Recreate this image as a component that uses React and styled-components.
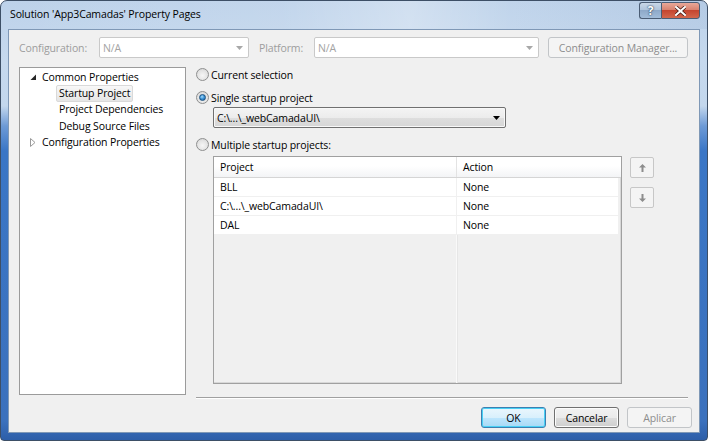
import React from 'react';
import styled, { createGlobalStyle, css } from 'styled-components';

const Global = createGlobalStyle`
  html, body { margin: 0; padding: 0; background: #fff; }
  * { box-sizing: border-box; }
  body {
    font-family: "Open Sans", "Noto Sans", sans-serif;
    font-size: 10.5px;
    letter-spacing: -0.12px;
    color: #000;
  }
`;

const treeItems = [
  { label: 'Common Properties', level: 0, arrow: 'open' },
  { label: 'Startup Project', level: 1, selected: true },
  { label: 'Project Dependencies', level: 1 },
  { label: 'Debug Source Files', level: 1 },
  { label: 'Configuration Properties', level: 0, arrow: 'closed' },
];

const projects = [
  { name: 'BLL', action: 'None' },
  { name: 'C:\\...\\_webCamadaUI\\', action: 'None' },
  { name: 'DAL', action: 'None' },
];

function Radio({ checked }) {
  return <RadioCircle>{checked && <RadioDot />}</RadioCircle>;
}

function DropArrow({ disabled }) {
  return (
    <svg width="7" height="4" viewBox="0 0 7 4">
      <path d="M0 0h7L3.5 4z" fill={disabled ? '#a8a8a8' : '#000'} />
    </svg>
  );
}

function MoveArrow({ down }) {
  return (
    <svg width="7" height="8" viewBox="0 0 7 8" style={down ? { transform: 'rotate(180deg)' } : undefined}>
      <path d="M3.5 0L7 3.5H4.5V8h-2V3.5H0z" fill="#8d8d8d" />
    </svg>
  );
}

function TreeArrow({ kind }) {
  if (kind === 'open') {
    return (
      <svg width="7" height="7" viewBox="0 0 7 7">
        <path d="M6 0.5V6H0.5z" fill="#262626" />
      </svg>
    );
  }
  return (
    <svg width="6" height="9" viewBox="0 0 6 9">
      <path d="M0.5 0.5L5 4.5L0.5 8.5z" fill="#fff" stroke="#9a9a9a" strokeWidth="1" />
    </svg>
  );
}

export default function App() {
  return (
    <>
      <Global />
      <Window>
        <TitleBar>
          <Title>Solution 'App3Camadas' Property Pages</Title>
          <CaptionButtons>
            <HelpButton>?</HelpButton>
            <CloseButton>
              <svg width="11" height="10" viewBox="0 0 11 10">
                <path d="M1 1L10 9M10 1L1 9" stroke="#4a1e18" strokeWidth="3.6" strokeLinecap="square" />
                <path d="M1 1L10 9M10 1L1 9" stroke="#fff" strokeWidth="2" strokeLinecap="square" />
              </svg>
            </CloseButton>
          </CaptionButtons>
        </TitleBar>
        <Client>
          <TopRow>
            <FieldLabel $w={80}>Configuration:</FieldLabel>
            <Combo $w={150} $disabled>
              <span>N/A</span>
              <DropArrow disabled />
            </Combo>
            <FieldLabel $w={55} $ml={10}>Platform:</FieldLabel>
            <Combo $w={225} $disabled>
              <span>N/A</span>
              <DropArrow disabled />
            </Combo>
            <PushButton $w={140} $ml={9} $variant="disabled">Configuration Manager...</PushButton>
          </TopRow>

          <Main>
            <Tree>
              {treeItems.map((it) => (
                <TreeRow key={it.label} $level={it.level}>
                  {it.level === 0 && (
                    <ArrowSlot>
                      <TreeArrow kind={it.arrow} />
                    </ArrowSlot>
                  )}
                  <TreeLabel $selected={it.selected}>{it.label}</TreeLabel>
                </TreeRow>
              ))}
            </Tree>

            <RightPane>
              <RadioRow>
                <Radio />
                <span>Current selection</span>
              </RadioRow>
              <RadioRow $mt={8}>
                <Radio checked />
                <span>Single startup project</span>
              </RadioRow>
              <Combo $w={293} $ml={17} $mt={2}>
                <span>C:\...\_webCamadaUI\</span>
                <DropArrow />
              </Combo>
              <RadioRow $mt={9}>
                <Radio />
                <span>Multiple startup projects:</span>
              </RadioRow>

              <GridArea>
                <Table>
                  <HeaderRow>
                    <HeadCell>Project</HeadCell>
                    <HeadCell>Action</HeadCell>
                  </HeaderRow>
                  {projects.map((p) => (
                    <Row key={p.name}>
                      <Cell>{p.name}</Cell>
                      <Cell>{p.action}</Cell>
                    </Row>
                  ))}
                  <EmptyRest>
                    <EmptyCol />
                    <span />
                  </EmptyRest>
                </Table>
                <MoveButtons>
                  <MoveButton>
                    <MoveArrow />
                  </MoveButton>
                  <MoveButton>
                    <MoveArrow down />
                  </MoveButton>
                </MoveButtons>
              </GridArea>

              <Separator />
            </RightPane>
          </Main>

          <ButtonRow>
            <PushButton $w={65} $variant="default">OK</PushButton>
            <PushButton $w={65}>Cancelar</PushButton>
            <PushButton $w={65} $variant="disabled">Aplicar</PushButton>
          </ButtonRow>
        </Client>
      </Window>
    </>
  );
}

const Window = styled.div`
  width: 708px;
  height: 441px;
  display: flex;
  flex-direction: column;
  padding: 0 7px 7px 7px;
  border: 1px solid #3d4f66;
  border-radius: 7px 7px 4px 4px;
  background:
    linear-gradient(to bottom, #bdd2ea 0px, #c6d9ee 60px, #c3d7ed 105px, #6d9ad6 125px, #3a76c6 150px, #3b71bd 420px, #2d5ea8 100%);
  overflow: hidden;
`;

const TitleBar = styled.div`
  height: 28px;
  display: flex;
  align-items: flex-start;
  justify-content: space-between;
  margin: 0 -7px;
  padding: 0 7px 0 9px;
  background: linear-gradient(to right, rgba(255,255,255,0) 0%, rgba(255,255,255,0.08) 40%, rgba(255,255,255,0.3) 58%, rgba(255,255,255,0.05) 72%, rgba(120,150,190,0.12) 100%);
`;

const Title = styled.div`
  margin-top: 5px;
  line-height: 16px;
  color: #000;
`;

const CaptionButtons = styled.div`
  display: flex;
  margin-top: 1px;
`;

const captionBase = css`
  height: 17px;
  display: flex;
  align-items: center;
  justify-content: center;
  border: 1px solid #4b5d75;
`;

const HelpButton = styled.div`
  ${captionBase};
  width: 22px;
  border-radius: 3px 0 0 3px;
  border-right: none;
  background: linear-gradient(to bottom, #c9d7e7 0%, #b0c4db 45%, #8ea9c9 50%, #a2bcd9 100%);
  color: #fff;
  font-weight: bold;
  font-size: 12px;
  letter-spacing: 0;
  text-shadow: 0 0 2px #2a3a55, 0 0 1px #2a3a55;
`;

const CloseButton = styled.div`
  ${captionBase};
  width: 39px;
  border-radius: 0 3px 3px 0;
  background: linear-gradient(to bottom, #e8a899 0%, #d9826f 45%, #c5452f 50%, #d2664c 100%);
`;

const Client = styled.div`
  flex: 1;
  display: flex;
  flex-direction: column;
  padding: 7px 7px 0 10px;
  background: #f0f0f0;
  border: 1px solid #7f98b6;
`;

const TopRow = styled.div`
  display: flex;
  align-items: center;
  height: 21px;
  margin-right: 4px;
`;

const FieldLabel = styled.div`
  width: ${(p) => p.$w}px;
  margin-left: ${(p) => p.$ml || 0}px;
  color: #9d9d9d;
  white-space: nowrap;
`;

const Combo = styled.div`
  width: ${(p) => p.$w}px;
  height: 21px;
  margin-left: ${(p) => p.$ml || 0}px;
  margin-top: ${(p) => p.$mt || 0}px;
  display: flex;
  align-items: center;
  justify-content: space-between;
  padding: 0 5px 0 3px;
  border-radius: 2px;
  ${(p) =>
    p.$disabled
      ? css`
          background: #fff;
          border: 1px solid #c9c9c9;
          color: #a3a3a3;
        `
      : css`
          background: linear-gradient(to bottom, #f4f4f4 0%, #ececec 50%, #dedede 51%, #d6d6d6 100%);
          border: 1px solid #707070;
          box-shadow: inset 0 0 0 1px #f8f8f8;
          color: #000;
        `}
`;

const PushButton = styled.div`
  width: ${(p) => p.$w}px;
  height: 21px;
  margin-left: ${(p) => p.$ml || 0}px;
  display: flex;
  align-items: center;
  justify-content: center;
  border-radius: 3px;
  white-space: nowrap;
  ${(p) =>
    p.$variant === 'disabled'
      ? css`
          border: 1px solid #c2c5c8;
          background: #f4f4f4;
          color: #8d8d8d;
        `
      : p.$variant === 'default'
      ? css`
          border: 1px solid #3c7fb1;
          background: linear-gradient(to bottom, #eaf6fd 0%, #d9f0fc 50%, #bee6fd 51%, #a7d9f5 100%);
          box-shadow: inset 0 0 0 1px #48d0f5;
          color: #000;
        `
      : css`
          border: 1px solid #707070;
          background: linear-gradient(to bottom, #f2f2f2 0%, #ebebeb 50%, #dddddd 51%, #cfcfcf 100%);
          box-shadow: inset 0 0 0 1px #fcfcfc;
          color: #000;
        `}
`;

const Main = styled.div`
  display: flex;
  gap: 10px;
  margin-top: 9px;
  margin-right: 4px;
`;

const Tree = styled.div`
  width: 167px;
  height: 328px;
  background: #fff;
  border: 1px solid #9b9b9b;
  padding-top: 1px;
`;

const TreeRow = styled.div`
  height: 16.3px;
  display: flex;
  align-items: center;
  padding-left: ${(p) => (p.$level === 0 ? 8 : 37)}px;
  white-space: nowrap;
`;

const ArrowSlot = styled.div`
  width: 12px;
  display: flex;
  align-items: center;
  padding-left: 2px;
`;

const TreeLabel = styled.span`
  padding: 0 2px;
  line-height: 15px;
  border: 1px solid transparent;
  margin-left: -1px;
  ${(p) =>
    p.$selected &&
    css`
      background: linear-gradient(to bottom, #f8f8f8, #e5e5e5);
      border-color: #d9d9d9;
      border-radius: 2px;
    `}
`;

const RightPane = styled.div`
  flex: 1;
  display: flex;
  flex-direction: column;
`;

const RadioRow = styled.div`
  height: 15px;
  margin-top: ${(p) => p.$mt || 0}px;
  display: flex;
  align-items: center;
  gap: 2px;
  white-space: nowrap;
`;

const RadioCircle = styled.div`
  width: 13px;
  height: 13px;
  border-radius: 50%;
  border: 1px solid #8e8f8f;
  background: radial-gradient(circle at 50% 60%, #f6f6f6 0%, #e4e4e4 55%, #cfcfcf 100%);
  display: flex;
  align-items: center;
  justify-content: center;
  flex: none;
`;

const RadioDot = styled.div`
  width: 7px;
  height: 7px;
  border-radius: 50%;
  background: radial-gradient(circle at 40% 35%, #a9dcfb 0%, #3f97d9 45%, #155a9c 100%);
  border: 1px solid #1c5180;
`;

const GridArea = styled.div`
  display: flex;
  gap: 8px;
  margin-top: 4px;
  margin-left: 17px;
`;

const Table = styled.div`
  width: 409px;
  height: 228px;
  display: flex;
  flex-direction: column;
  border: 1px solid #a0a0a0;
  box-shadow: inset -1px -1px 0 #d8d8d8;
  background: #f0f0f0;
  padding-right: 3px;
`;

const HeaderRow = styled.div`
  height: 21px;
  display: grid;
  grid-template-columns: 243px 1fr;
  background: linear-gradient(to bottom, #ffffff 0%, #ffffff 45%, #f3f4f6 100%);
  border-bottom: 1px solid #d5d5d5;
  margin-right: -3px;
`;

const HeadCell = styled.div`
  display: flex;
  align-items: center;
  padding-left: 6px;
  &:first-child { border-right: 1px solid #e3e3e3; }
`;

const Row = styled.div`
  height: 19px;
  display: grid;
  grid-template-columns: 243px 1fr;
  background: #fff;
  border-bottom: 1px solid #f0f0f0;
`;

const Cell = styled.div`
  display: flex;
  align-items: center;
  padding-left: 6px;
  white-space: nowrap;
  &:first-child { border-right: 1px solid #f0f0f0; }
`;

const EmptyRest = styled.div`
  flex: 1;
  display: grid;
  grid-template-columns: 243px 1fr;
`;

const EmptyCol = styled.div`
  border-right: 1px solid #f9f9f9;
  box-shadow: 1px 0 0 #e6e6e6;
`;

const MoveButtons = styled.div`
  display: flex;
  flex-direction: column;
  gap: 9px;
  margin-top: 1px;
`;

const MoveButton = styled.div`
  width: 24px;
  height: 21px;
  display: flex;
  align-items: center;
  justify-content: center;
  border: 1px solid #c7c7c7;
  border-radius: 2px;
  background: #f4f4f4;
`;

const Separator = styled.div`
  margin-top: 13px;
  height: 2px;
  border-top: 1px solid #a0a0a0;
  border-bottom: 1px solid #ffffff;
`;

const ButtonRow = styled.div`
  display: flex;
  justify-content: flex-end;
  gap: 8px;
  margin-top: 8px;
`;
